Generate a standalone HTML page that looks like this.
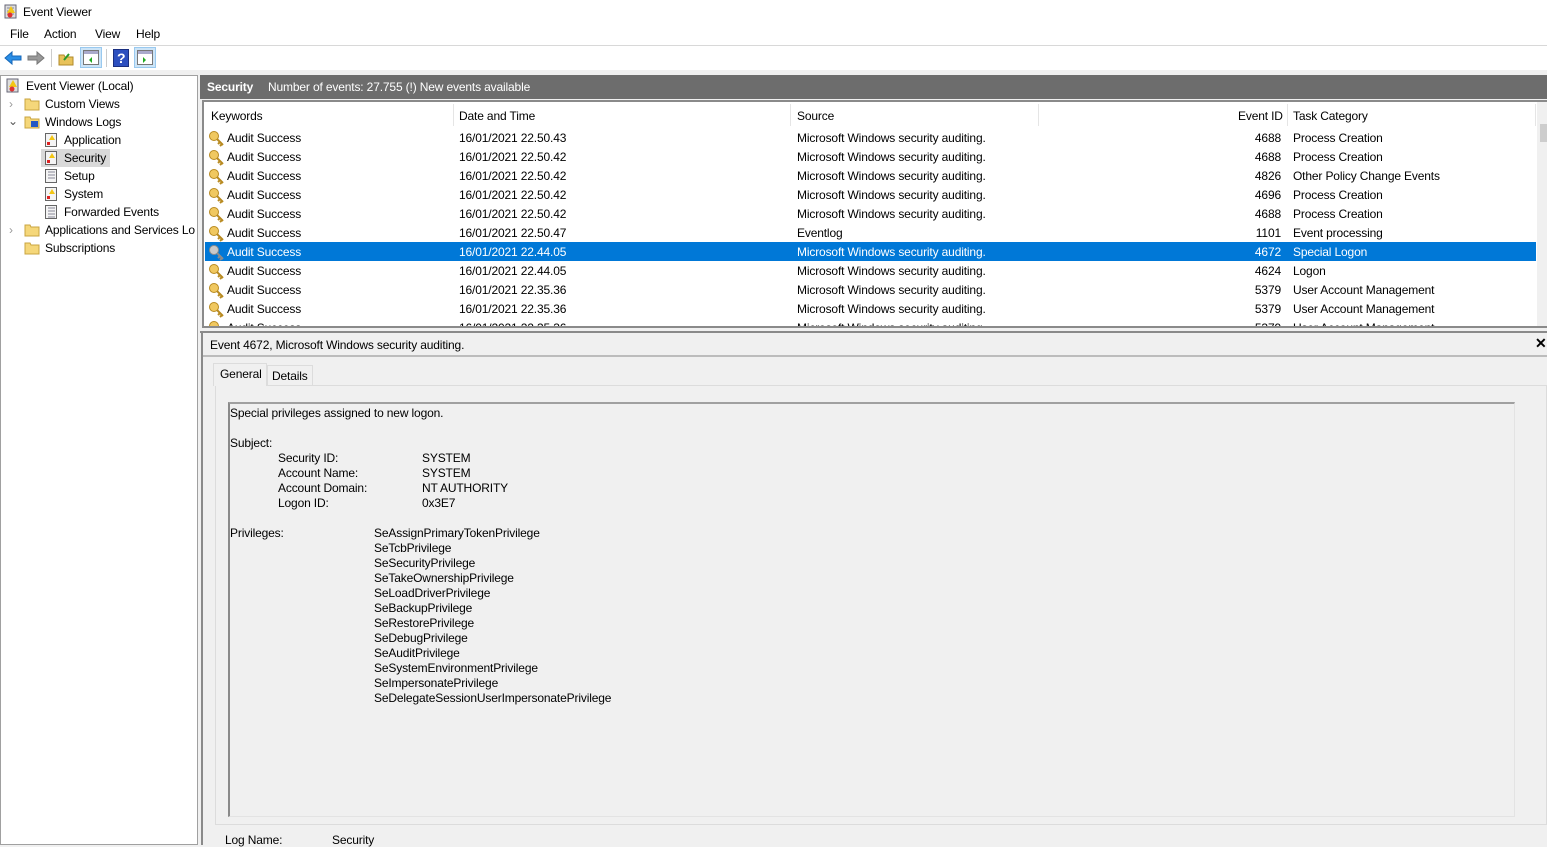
<!DOCTYPE html>
<html><head><meta charset="utf-8"><style>
*{margin:0;padding:0;box-sizing:border-box}
body{width:1547px;height:845px;overflow:hidden;background:#f0f0f0;font-family:"Liberation Sans",sans-serif;font-size:12px;letter-spacing:-0.15px;color:#000;position:relative}
.a{position:absolute;white-space:nowrap}
</style></head><body>
<div class="a" style="left:0;top:0;width:1547px;height:45px;background:#fff"></div>
<svg class="a" style="left:4px;top:4px" width="14" height="15"><rect x="1" y="1" width="11" height="13" fill="#ddd" stroke="#667"/><path d="M3 4h7M3 7h7M3 10h7" stroke="#889"/><path d="M7 2l4 7H3z" fill="#f3c614"/><circle cx="6" cy="11" r="2.5" fill="#d33"/></svg>
<div class="a" style="left:23px;top:5px">Event Viewer</div>
<div class="a" style="left:10px;top:27px">File</div>
<div class="a" style="left:44px;top:27px">Action</div>
<div class="a" style="left:95px;top:27px">View</div>
<div class="a" style="left:136px;top:27px">Help</div>
<div class="a" style="left:0;top:45px;width:1547px;height:1px;background:#d8d8d8"></div>
<div class="a" style="left:0;top:46px;width:1547px;height:24px;background:#fff"></div>
<svg class="a" style="left:4px;top:50px" width="18" height="16"><path d="M1 8l7-6v4h9v4H8v4z" fill="#2a8ee6" stroke="#1667b8"/></svg>
<svg class="a" style="left:27px;top:50px" width="18" height="16"><path d="M17 8l-7-6v4H1v4h9v4z" fill="#999" stroke="#777"/></svg>
<div class="a" style="left:51px;top:49px;width:1px;height:18px;background:#ccc"></div>
<svg class="a" style="left:58px;top:50px" width="16" height="16"><path d="M1 5h5l1 2h8v8H1z" fill="#e8c25a" stroke="#b08a2a"/><path d="M6 10l5-6" stroke="#2a9a2a" stroke-width="2"/></svg>
<div class="a" style="left:80px;top:47px;width:22px;height:21px;background:#cce4f7;border:1px solid #99c9ef"></div>
<svg class="a" style="left:83px;top:50px" width="16" height="15"><rect x="0.5" y="0.5" width="15" height="14" fill="#fff" stroke="#777"/><rect x="1" y="1" width="14" height="3" fill="#aac"/><path d="M9 7l-3 3 3 3z" fill="#2a2"/></svg>
<div class="a" style="left:106px;top:49px;width:1px;height:18px;background:#ccc"></div>
<svg class="a" style="left:113px;top:49px" width="16" height="18"><rect x="0.5" y="0.5" width="15" height="17" fill="#2c4fbf" stroke="#1a2f80"/><text x="4" y="14" fill="#fff" font-size="14" font-weight="bold" font-family="Liberation Sans">?</text></svg>
<div class="a" style="left:134px;top:47px;width:22px;height:21px;background:#cce4f7;border:1px solid #99c9ef"></div>
<svg class="a" style="left:137px;top:50px" width="16" height="15"><rect x="0.5" y="0.5" width="15" height="14" fill="#fff" stroke="#777"/><rect x="1" y="1" width="14" height="3" fill="#aac"/><path d="M6 7l3 3-3 3z" fill="#2a2"/></svg>

<div class="a" style="left:0;top:75px;width:198px;height:770px;background:#fff;border:1px solid #a0a0a0"></div>
<div class="a" style="left:26px;top:79px">Event Viewer (Local)</div>
<svg class="a" style="left:6px;top:78px" width="14" height="15"><rect x="1" y="1" width="11" height="13" fill="#ddd" stroke="#667"/><path d="M7 2l4 7H3z" fill="#f3c614"/><circle cx="6" cy="11" r="2.5" fill="#d33"/></svg>
<div class="a" style="left:9px;top:97px;color:#999">›</div>
<div class="a" style="left:8px;top:114px;color:#555">⌄</div>
<div class="a" style="left:9px;top:223px;color:#999">›</div>
<svg class="a" style="left:24px;top:97px" width="16" height="14"><path d="M1 2h5l1 2h8v9H1z" fill="#f5d77a" stroke="#c9a440"/></svg>
<svg class="a" style="left:24px;top:115px" width="16" height="14"><path d="M1 2h5l1 2h8v9H1z" fill="#f5d77a" stroke="#c9a440"/><rect x="7" y="6" width="7" height="6" fill="#2357c4"/></svg>
<svg class="a" style="left:24px;top:223px" width="16" height="14"><path d="M1 2h5l1 2h8v9H1z" fill="#f5d77a" stroke="#c9a440"/></svg>
<svg class="a" style="left:24px;top:241px" width="16" height="14"><path d="M1 2h5l1 2h8v9H1z" fill="#f5d77a" stroke="#c9a440"/></svg>
<div class="a" style="left:45px;top:97px">Custom Views</div>
<div class="a" style="left:45px;top:115px">Windows Logs</div>
<div class="a" style="left:41px;top:149px;width:69px;height:18px;background:#d9d9d9"></div>
<div class="a" style="left:64px;top:133px">Application</div>
<div class="a" style="left:64px;top:151px">Security</div>
<div class="a" style="left:64px;top:169px">Setup</div>
<div class="a" style="left:64px;top:187px">System</div>
<div class="a" style="left:64px;top:205px">Forwarded Events</div>
<div class="a" style="left:45px;top:223px;width:152px;overflow:hidden">Applications and Services Lo</div>
<div class="a" style="left:45px;top:241px">Subscriptions</div>
<svg class="a" style="left:44px;top:132px" width="15" height="90">
<g fill="#f4f4f4" stroke="#666"><rect x="1.5" y="1.5" width="11" height="13"/><rect x="1.5" y="19.5" width="11" height="13"/><rect x="1.5" y="37.5" width="11" height="13"/><rect x="1.5" y="55.5" width="11" height="13"/><rect x="1.5" y="73.5" width="11" height="13"/></g>
<path d="M4 40h7M4 43h7M4 46h7M4 76h7M4 79h7M4 82h7M4 85h7" stroke="#889"/>
<path d="M8 3l3 5H5zM8 21l3 5H5zM8 57l3 5H5z" fill="#f3c614"/>
<path d="M3 10h3v3H3zM3 28h3v3H3zM3 64h3v3H3z" fill="#d22"/>
</svg>

<div class="a" style="left:200px;top:75px;width:1347px;height:24px;background:#6d6d6d"></div>
<div class="a" style="left:207px;top:80px;color:#fff;font-weight:bold">Security</div>
<div class="a" style="left:268px;top:80px;color:#fff">Number of events: 27.755 (!) New events available</div>
<div class="a" style="left:202px;top:100px;width:1345px;height:228px;background:#fff;border:2px solid #8a8a8a;border-right:none"></div>
<div class="a" style="left:211px;top:109px">Keywords</div>
<div class="a" style="left:459px;top:109px">Date and Time</div>
<div class="a" style="left:797px;top:109px">Source</div>
<div class="a" style="left:1238px;top:109px">Event ID</div>
<div class="a" style="left:1293px;top:109px">Task Category</div>
<div class="a" style="left:453px;top:104px;width:1px;height:22px;background:#e5e5e5"></div>
<div class="a" style="left:790px;top:104px;width:1px;height:22px;background:#e5e5e5"></div>
<div class="a" style="left:1038px;top:104px;width:1px;height:22px;background:#e5e5e5"></div>
<div class="a" style="left:1287px;top:104px;width:1px;height:22px;background:#e5e5e5"></div>
<div class="a" style="left:1535px;top:104px;width:1px;height:22px;background:#e5e5e5"></div>
<div class="a" style="left:1537px;top:102px;width:10px;height:224px;background:#f0f0f0"></div>
<div class="a" style="left:1540px;top:124px;width:7px;height:18px;background:#cdcdcd"></div>
<div class="a" style="left:205px;top:242px;width:1331px;height:19px;background:#0078d7"></div>

<div class="a" style="left:200px;top:331px;width:1347px;height:2px;background:#8a8a8a"></div>
<div class="a" style="left:201px;top:333px;width:1346px;height:512px;border-left:2px solid #8a8a8a"></div>
<div class="a" style="left:210px;top:338px">Event 4672, Microsoft Windows security auditing.</div>
<div class="a" style="left:1535px;top:335px;font-weight:bold;font-size:14px">✕</div>
<div class="a" style="left:203px;top:355px;width:1344px;height:2px;background:#bcbcbc"></div>
<div class="a" style="left:215px;top:385px;width:1332px;height:440px;background:#f0f0f0;border:1px solid #dcdcdc"></div>
<div class="a" style="left:267px;top:365px;width:46px;height:21px;border:1px solid #dcdcdc;background:#f0f0f0"></div>
<div class="a" style="left:213px;top:363px;width:54px;height:23px;border:1px solid #dcdcdc;border-bottom:none;background:#f0f0f0"></div>
<div class="a" style="left:220px;top:367px">General</div>
<div class="a" style="left:272px;top:369px">Details</div>
<div class="a" style="left:228px;top:402px;width:1287px;height:415px;border:1px solid #e3e3e3;border-left:2px solid #8a8a8a;border-top:2px solid #a0a0a0"></div>
<div class="a" style="left:230px;top:406px;line-height:15px">Special privileges assigned to new logon.<br><br>Subject:</div>
<div class="a" style="left:278px;top:451px;line-height:15px">Security ID:<br>Account Name:<br>Account Domain:<br>Logon ID:</div>
<div class="a" style="left:422px;top:451px;line-height:15px">SYSTEM<br>SYSTEM<br>NT AUTHORITY<br>0x3E7</div>
<div class="a" style="left:230px;top:526px">Privileges:</div>
<div class="a" style="left:374px;top:526px;line-height:15px">SeAssignPrimaryTokenPrivilege<br>SeTcbPrivilege<br>SeSecurityPrivilege<br>SeTakeOwnershipPrivilege<br>SeLoadDriverPrivilege<br>SeBackupPrivilege<br>SeRestorePrivilege<br>SeDebugPrivilege<br>SeAuditPrivilege<br>SeSystemEnvironmentPrivilege<br>SeImpersonatePrivilege<br>SeDelegateSessionUserImpersonatePrivilege</div>
<div class="a" style="left:225px;top:833px">Log Name:</div>
<div class="a" style="left:332px;top:833px">Security</div>

<div class="a" style="left:205px;top:128px;width:1331px;height:198px;overflow:hidden">
<div style="position:relative;line-height:19px;top:1px">
<div class="a" style="left:22px;top:0">Audit Success<br>Audit Success<br>Audit Success<br>Audit Success<br>Audit Success<br>Audit Success<br><span style="color:#fff">Audit Success</span><br>Audit Success<br>Audit Success<br>Audit Success<br>Audit Success</div>
<div class="a" style="left:254px;top:0">16/01/2021 22.50.43<br>16/01/2021 22.50.42<br>16/01/2021 22.50.42<br>16/01/2021 22.50.42<br>16/01/2021 22.50.42<br>16/01/2021 22.50.47<br><span style="color:#fff">16/01/2021 22.44.05</span><br>16/01/2021 22.44.05<br>16/01/2021 22.35.36<br>16/01/2021 22.35.36<br>16/01/2021 22.35.36</div>
<div class="a" style="left:592px;top:0">Microsoft Windows security auditing.<br>Microsoft Windows security auditing.<br>Microsoft Windows security auditing.<br>Microsoft Windows security auditing.<br>Microsoft Windows security auditing.<br>Eventlog<br><span style="color:#fff">Microsoft Windows security auditing.</span><br>Microsoft Windows security auditing.<br>Microsoft Windows security auditing.<br>Microsoft Windows security auditing.<br>Microsoft Windows security auditing.</div>
<div class="a" style="left:1036px;top:0;width:40px;text-align:right">4688<br>4688<br>4826<br>4696<br>4688<br>1101<br><span style="color:#fff">4672</span><br>4624<br>5379<br>5379<br>5379</div>
<div class="a" style="left:1088px;top:0">Process Creation<br>Process Creation<br>Other Policy Change Events<br>Process Creation<br>Process Creation<br>Event processing<br><span style="color:#fff">Special Logon</span><br>Logon<br>User Account Management<br>User Account Management<br>User Account Management</div>
<svg class="a" style="left:3px;top:0" width="17" height="209">
<defs><g id="k"><circle cx="6" cy="6" r="4.5" fill="#f0c860" stroke="#b88a20"/><path d="M9 9l6 6M12 12l-2 2M14 14l-2 2" stroke="#b88a20" stroke-width="2"/></g></defs>
<use href="#k" y="1"/><use href="#k" y="20"/><use href="#k" y="39"/><use href="#k" y="58"/><use href="#k" y="77"/><use href="#k" y="96"/><use href="#k" y="115" style="filter:grayscale(1)"/><use href="#k" y="134"/><use href="#k" y="153"/><use href="#k" y="172"/><use href="#k" y="191"/>
</svg>
</div></div>
</body></html>
